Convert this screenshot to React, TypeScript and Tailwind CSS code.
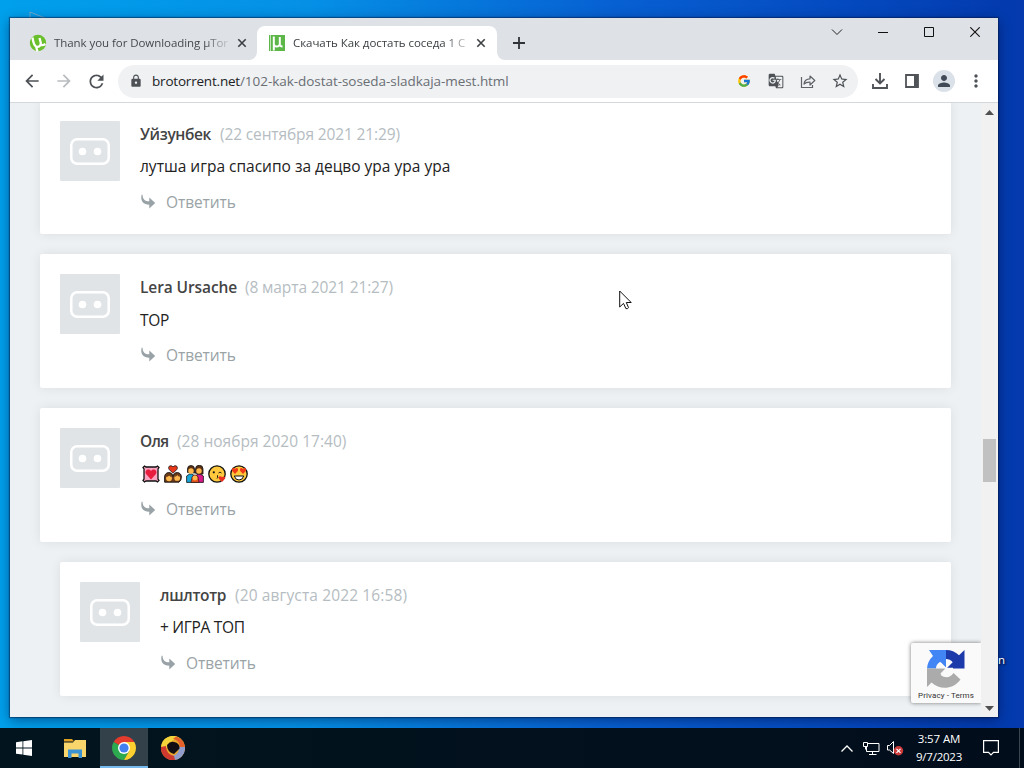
import type { ReactNode } from "react";
import { FcGoogle } from "react-icons/fc";
import {
  MdArrowBack,
  MdArrowForward,
  MdRefresh,
  MdLock,
  MdStarBorder,
  MdPerson,
  MdMoreVert,
  MdGTranslate,
} from "react-icons/md";

type Comment = {
  author: string;
  authorClass: string;
  date: string;
  dateClass: string;
  body: ReactNode;
  bodyClass: string;
  cardClass: string;
};

function Emojis() {
  return (
    <span className="flex gap-[4px] pl-[2px]">
      <svg width="18" height="18" viewBox="0 0 18 18" role="img" aria-label="💟">
        <path d="M2.500 1 4 2h10l1.500-1L17 2.500 16 4v10l1 1.500L15.500 17 14 16H4l-1.500 1L1 15.500 2 14V4L1 2.500Z" fill="#f9a3c0" stroke="#111" strokeWidth="1.300" />
        <path d="M9 14.500 4.300 9.300C1.800 5.500 6.500 2.500 9 6c2.500-3.500 7.200-.5 4.700 3.300Z" fill="#e81c3c" />
      </svg>
      <svg width="18" height="18" viewBox="0 0 18 18" role="img" aria-label="👩‍❤️‍👩">
        <path d="M9 8.300 5.300 4.600C3 1 7.300-.5 9 2c1.700-2.500 6-1 3.700 2.600Z" fill="#e8381b" stroke="#111" strokeWidth=".8" />
        <path d="M.6 17.200V12a4.200 4.200 0 0 1 8.400-.5A4.200 4.200 0 0 1 17.400 12q.2 3-2.400 5.200Z" fill="#6b3a18" stroke="#111" strokeWidth=".9" />
        <circle cx="5" cy="13.300" r="2.900" fill="#ffb94c" />
        <circle cx="13.200" cy="12.900" r="2.900" fill="#ffb94c" />
        <path d="M2.200 12q2.300 0 3-1.700.6 1.500 2.500 1.700Q7 9.500 5 9.500T2.200 12ZM10.400 11.700q2.300 0 3-1.700.6 1.500 2.500 1.700-.7-2.500-2.700-2.500t-2.800 2.500Z" fill="#6b3a18" />
      </svg>
      <svg width="18" height="18" viewBox="0 0 18 18" role="img" aria-label="👪">
        <path d="M.6 17.400V11l3-2h2l3.400 2v6.400Z" fill="#18a6d8" stroke="#111" strokeWidth=".8" />
        <path d="M17.400 17.400V11l-3-2h-2L9 11v6.400Z" fill="#d9198a" stroke="#111" strokeWidth=".8" />
        <path d="M1.500 7.500V4a3.500 3.500 0 0 1 7 0v3l1 1V4a3.500 3.500 0 0 1 7.500 0v5h-4L9 8Z" fill="#5d3115" stroke="#111" strokeWidth=".8" />
        <circle cx="5" cy="6" r="2.700" fill="#ffb94c" />
        <circle cx="13" cy="6" r="2.700" fill="#ffb94c" />
        <path d="M5 17.400 6 12a3.200 3.200 0 0 1 6 0l1 5.400Z" fill="#e8551b" stroke="#111" strokeWidth=".6" />
        <circle cx="9" cy="13" r="2.400" fill="#ffb94c" />
      </svg>
      <svg width="18" height="18" viewBox="0 0 18 18" role="img" aria-label="😘">
        <circle cx="9" cy="9" r="8.200" fill="#ffc83d" stroke="#111" strokeWidth="1.300" />
        <circle cx="5.800" cy="7.300" r="1.100" fill="#111" />
        <path d="M10.500 8q1.500-1.800 3 0M9 10.500q2 .2 0 1.500 2 .2 0 1.500" fill="none" stroke="#111" strokeWidth=".9" />
        <path d="M14 17 10.800 13.800c-1-2.600 1.900-3.300 3.200-1.600 1.300-1.700 4.200-.5 3 1.600Z" fill="#e8301f" />
      </svg>
      <svg width="18" height="18" viewBox="0 0 18 18" role="img" aria-label="😍">
        <circle cx="9" cy="9" r="8.200" fill="#ffc83d" stroke="#111" strokeWidth="1.300" />
        <path d="M5 9 2.200 6C1 3 4 2 5 4.300 6 2 9 3 7.800 6ZM13 9l-2.800-3c-1.200-3 1.800-4 2.800-1.700C14 2 17 3 15.800 6Z" fill="#f03a17" />
        <path d="M4.300 11h9.400q-1 4-4.700 4t-4.700-4Z" fill="#fff" stroke="#111" />
      </svg>
    </span>
  );
}

const comments: Comment[] = [
  {
    author: "Уйзунбек",
    authorClass: "w-[80px] tracking-[-0.37px]",
    date: "(22 сентября 2021 21:29)",
    dateClass: "tracking-[-0.13px]",
    body: <span>лутша игра спасипо за децво ура ура ура</span>,
    bodyClass: "mt-[9px] mb-3",
    cardClass: "h-[133px]",
  },
  {
    author: "Lera Ursache",
    authorClass: "w-[105px] tracking-[-0.1px]",
    date: "(8 марта 2021 21:27)",
    dateClass: "tracking-[-0.12px]",
    body: <span className="tracking-[-0.3px]">TOP</span>,
    bodyClass: "mt-[10px] mb-[11px]",
    cardClass: "h-[134px]",
  },
  {
    author: "Оля",
    authorClass: "w-[37px] tracking-[-0.7px]",
    date: "(28 ноября 2020 17:40)",
    dateClass: "tracking-[0.02px]",
    body: <Emojis />,
    bodyClass: "mt-[10px] mb-[11px]",
    cardClass: "h-[134px]",
  },
  {
    author: "лшлтотр",
    authorClass: "w-[75px] tracking-[-0.3px]",
    date: "(20 августа 2022 16:58)",
    dateClass: "tracking-[0.13px]",
    body: <span className="tracking-[-0.3px]">+ ИГРА ТОП</span>,
    bodyClass: "mt-[9px] mb-3",
    cardClass: "ml-5 h-[134px]",
  },
];

function CommentCard({ c }: { c: Comment }) {
  return (
    <article className={`flex shrink-0 gap-5 rounded-[2px] bg-white p-5 shadow-[0_0_12px_rgba(0,20,30,0.08)] ${c.cardClass}`}>
      <div className="flex size-[60px] shrink-0 items-center justify-center rounded-[1px] bg-[#e0e4e7]">
        <svg width="40" height="27" viewBox="0 0 40 27">
          <rect x="1.250" y="1.250" width="37.500" height="24.500" rx="6" fill="none" stroke="#fff" strokeWidth="2.500" />
          <circle cx="12.500" cy="13.500" r="3.800" fill="#fff" />
          <circle cx="27.500" cy="13.500" r="3.800" fill="#fff" />
        </svg>
      </div>
      <div className="flex flex-col whitespace-nowrap text-[15.500px] leading-6">
        <div className="flex h-6 pt-[1px]">
          <span className={`shrink-0 font-semibold text-[#444] ${c.authorClass}`}>{c.author}</span>
          <span className={`text-[#b5bdc2] ${c.dateClass}`}>{c.date}</span>
        </div>
        <div className={`flex h-6 items-center text-[#222] ${c.bodyClass}`}>{c.body}</div>
        <div className="flex h-6 items-center text-[#9aa3a6]">
          <svg width="16" height="16" viewBox="0 0 16 16" className="mr-[10px]">
            <path d="M1.600.8C.2 7.500 3.500 10.700 9.300 10.700V14.600L15.200 9 9.300 3.500V7.300C5.500 7.500 2.500 5.500 2.600.8Z" fill="#98a2a7" />
          </svg>
          <span className="tracking-[-0.1px]">Ответить</span>
        </div>
      </div>
    </article>
  );
}

function CloseX() {
  return (
    <svg width="10" height="10" viewBox="0 0 10 10" className="shrink-0">
      <path d="m1.300 1.300 7.400 7.400m0-7.400L1.300 8.700" stroke="#3c4043" strokeWidth="1.600" />
    </svg>
  );
}

function TabStrip() {
  return (
    <header className="flex h-[42px] shrink-0 bg-[#dee1e6]">
      <div className="mt-2 flex h-[34px] w-[247px] items-center pl-[19px]">
        <svg width="18" height="18" viewBox="0 0 18 18" className="shrink-0">
          <circle cx="9" cy="9" r="8.200" fill="#6abf2c" />
          <path d="M3.500 3.500Q4.500 11 7 12.500c3 1 5-.7 4.800-3.500L10.500 4M12 11q2 .5 4.500-1M7 12.500l1.500 5" fill="none" stroke="#fff" strokeWidth="2.300" />
        </svg>
        <span className="ml-[7px] w-[174px] overflow-hidden text-[11.500px] tracking-[-0.06px] whitespace-nowrap text-[#45494d] [mask-image:linear-gradient(to_right,#000_150px,transparent_178px)]">
          Thank you for Downloading µTor
        </span>
        <span className="ml-[9px] flex"><CloseX /></span>
      </div>
      <div className="relative mt-2 flex h-[34px] w-[240px] items-center rounded-t-lg bg-white pl-3">
        <svg width="8" height="8" viewBox="0 0 8 8" className="absolute bottom-0 -left-2"><path d="M8 0v8H0a8 8 0 0 0 8-8" fill="#fff" /></svg>
        <svg width="8" height="8" viewBox="0 0 8 8" className="absolute -right-2 bottom-0"><path d="M0 0v8h8a8 8 0 0 1-8-8" fill="#fff" /></svg>
        <svg width="16" height="16" viewBox="0 0 16 16" className="shrink-0">
          <path d="M0 0h16v16H0Z" fill="#5cb648" />
          <path d="M4.800 1.500v14M4.800 9q.3 2.600 3 2.600t3-2.600V2M11 9.500q0 2 2.500 2" fill="none" stroke="#fff" strokeWidth="2" />
          <path d="M1.500 0v16" stroke="#c4e5bb" strokeWidth="1" />
        </svg>
        <span className="ml-2 w-[176px] overflow-hidden text-[11.500px] tracking-[-0.05px] whitespace-nowrap text-[#3c4043] [mask-image:linear-gradient(to_right,#000_150px,transparent_182px)]">
          Скачать Как достать соседа 1 С
        </span>
        <span className="ml-[7px] flex"><CloseX /></span>
      </div>
      <svg width="12" height="12" viewBox="0 0 12 12" className="mt-[19px] ml-4 shrink-0">
        <path d="M6 0v12M0 6h12" stroke="#303338" strokeWidth="1.800" />
      </svg>
      <div className="ml-auto flex h-[28px] items-center">
        <span className="flex w-[46px] justify-center"><svg width="12" height="8" viewBox="0 0 12 8"><path d="m1 1.500 5 5 5-5" fill="none" stroke="#222" /></svg></span>
        <span className="flex w-[46px] justify-center"><svg width="10" height="2" viewBox="0 0 10 2"><path d="M0 1.500h10" stroke="#111" /></svg></span>
        <span className="flex w-[46px] justify-center"><svg width="10" height="10" viewBox="0 0 10 10"><path d="M.5.5h9v9h-9Z" fill="none" stroke="#111" /></svg></span>
        <span className="flex w-[46px] justify-center"><svg width="10" height="10" viewBox="0 0 10 10"><path d="m.3.3 9.400 9.400m0-9.400-9.400 9.400" stroke="#111" strokeWidth="1.100" /></svg></span>
      </div>
    </header>
  );
}

function Toolbar() {
  return (
    <div className="flex h-[43px] shrink-0 items-center border-b border-[#d5d8db] bg-white pl-[12px] text-[#4e5256]">
      <MdArrowBack size={20} />
      <MdArrowForward size={20} className="ml-3 text-[#b9bcbf]" />
      <MdRefresh size={21} className="ml-[12px]" />
      <div className="ml-[11px] flex h-[33px] w-[740px] items-center rounded-full bg-[#eff1f3]">
        <MdLock size={14} className="ml-[11px]" />
        <span className="ml-[9px] text-[13.500px] whitespace-nowrap">
          <span className="tracking-[-0.2px] text-[#202124]">brotorrent.net</span>
          <span className="tracking-[-0.05px] text-[#6a6e73]">/102-kak-dostat-soseda-sladkaja-mest.html</span>
        </span>
        <div className="ml-auto flex items-center">
          <span className="flex w-8 justify-center"><FcGoogle size={14} /></span>
          <span className="flex w-8 justify-center"><MdGTranslate size={16} /></span>
          <span className="flex w-8 justify-center">
            <svg width="16" height="16" viewBox="0 0 16 16" fill="none" stroke="#5f6368" strokeWidth="1.200">
              <path d="M1.500 4v10.500h11V12" />
              <path d="M4 11q.5-5 6-5.200V3l4.800 4.500L10 12V9.200Q6 9 4 11Z" strokeLinejoin="round" />
            </svg>
          </span>
          <span className="mr-[2px] flex w-8 justify-center"><MdStarBorder size={18} /></span>
        </div>
      </div>
      <svg width="18" height="18" viewBox="0 0 18 18" className="ml-[13px]" fill="none" stroke="#505458" strokeWidth="1.900">
        <path d="M9 1v10M4.500 7 9 11.500 13.500 7M2 12v4h14v-4" />
      </svg>
      <svg width="14" height="14" viewBox="0 0 14 14" className="ml-[16px]">
        <path d="M1 1h12v12H1Z" fill="none" stroke="#505458" strokeWidth="1.800" />
        <path d="M9 1h4v12H9Z" fill="#505458" />
      </svg>
      <span className="ml-[14px] flex size-[22px] items-center justify-center rounded-full bg-[#dbe1e8] text-[#414a57]"><MdPerson size={18} /></span>
      <MdMoreVert size={20} className="ml-[11px]" />
    </div>
  );
}

function Recaptcha() {
  return (
    <div className="absolute right-[17px] bottom-[14px] flex h-[60px] w-[70px] flex-col items-center rounded-l-[2px] bg-[#fafafa] pt-[6px] shadow-[0_0_4px_#777] [clip-path:inset(-6px_0_-6px_-6px)]">
      <svg width="40" height="40" viewBox="0 0 40 40">
        <path d="M20 1a19 19 0 0 1 13 5.300L38.500 1v18.500H20.500l6.200-6.200Q24 10 20 10Z" fill="#1c3aa9" />
        <path d="M1 19.500A19 19 0 0 1 7 7L3 1h17v18L14 13q-4 2-4 6.500Z" fill="#4285f4" />
        <path d="M1 19.500V38l4.500-4.500Q13 40 22 38.500q8-1.500 12.500-8L27.500 24q-5.500 7.500-13 2l6-6.500Z" fill="#ababab" />
        <path d="M14 13.500 20 19.500h7M20 20l-5 5" stroke="#fafafa" strokeWidth="1.500" fill="none" />
      </svg>
      <span className="mt-[2px] font-['Roboto'] text-[8px] leading-[10px] tracking-[0.1px] whitespace-nowrap text-[#333]">Privacy - Terms</span>
    </div>
  );
}

function BrowserWindow() {
  return (
    <main className="relative flex h-[699px] w-[988px] shrink-0 flex-col bg-white shadow-[0_0_1px_1px_rgba(0,20,60,0.450),0_3px_12px_rgba(0,5,40,0.450)]">
      <TabStrip />
      <Toolbar />
      <div className="flex min-h-0 flex-1 overflow-hidden bg-[#edf1f4]">
        <section className="-mt-[2px] flex w-[971px] flex-col gap-5 pr-[30px] pl-[30px]">
          {comments.map((c) => <CommentCard key={c.author} c={c} />)}
        </section>
        <div className="flex w-[17px] flex-col items-center bg-[#f1f1f1]">
          <svg width="9" height="5" viewBox="0 0 9 5" className="mt-[7px]"><path d="M0 5 4.500 0 9 5Z" fill="#505050" /></svg>
          <div className="mt-[324px] h-[43px] w-[13px] bg-[#c1c1c1]" />
          <svg width="9" height="5" viewBox="0 0 9 5" className="mt-auto mb-[6px]"><path d="M0 0 4.500 5 9 0Z" fill="#505050" /></svg>
        </div>
      </div>
      <Recaptcha />
    </main>
  );
}

function Taskbar() {
  return (
    <footer className="relative flex h-10 shrink-0 items-center bg-[linear-gradient(to_right,#02151e,#020d1c)] text-white">
      <span className="flex w-12 justify-center">
        <svg width="16" height="16" viewBox="0 0 16 16" fill="#fff"><path d="M0 2.200 6.500 1.300v6.200H0ZM7.300 1.200 16 0v7.500H7.300ZM0 8.400h6.500v6.200L0 13.700ZM7.300 8.400H16V16l-8.700-1.300Z" /></svg>
      </span>
      <span className="ml-[3px] flex w-12 justify-center">
        <svg width="22" height="19" viewBox="0 0 22 19">
          <path d="M0 0h8l2 2.500H0Z" fill="#e0a022" />
          <path d="M0 18V3.500h9L11 1h11v17Z" fill="#f8d66b" />
          <path d="M4 19v-8.500h14V19h-3.500v-4.500h-7V19Z" fill="#3c93d4" />
        </svg>
      </span>
      <span className="ml-px flex h-10 w-12 items-center justify-center border-b-2 border-[#76b9ed] bg-[#33424a] pt-[2px]">
        <svg width="24" height="24" viewBox="0 0 24 24">
          <path d="M12 12 1.610 6a12 12 0 0 1 20.780 0Z" fill="#e33b2e" />
          <path d="M12 12 1.610 6A12 12 0 0 0 12 24l5.200-9Z" fill="#2da94f" />
          <path d="M12 6h10.390A12 12 0 0 1 12 24l5.200-9Z" fill="#fdd02f" />
          <circle cx="12" cy="12" r="6" fill="#fff" />
          <circle cx="12" cy="12" r="4.600" fill="#4280ef" />
        </svg>
      </span>
      <span className="flex w-[50px] justify-center">
        <svg width="24" height="24" viewBox="0 0 24 24">
          <circle cx="12" cy="12" r="12" fill="#e9a52c" />
          <path d="M0 12A12 12 0 0 1 20 3Q9 2 6 12Z" fill="#f3d43a" />
          <path d="M15 .4A12 12 0 0 1 24 12h-5Q19 4 12 3Z" fill="#e5612c" />
          <path d="M24 11a12 12 0 0 1-12 13l-1-4q7-1 7-9Z" fill="#8f9ccc" />
          <path d="M14 24A12 12 0 0 1 0 11l5-1q0 8 8 10Z" fill="#cf3a30" />
          <path d="M6 9q3-4 7-3 6 1 5.500 6.500L13 18Q6 16 6 9Z" fill="#130e13" />
        </svg>
      </span>
      <div className="ml-auto flex items-center">
        <svg width="12" height="7" viewBox="0 0 12 7"><path d="m.5 6.500 5.500-5.500 5.500 5.500" fill="none" stroke="#fff" strokeWidth="1.300" /></svg>
        <svg width="17" height="15" viewBox="0 0 17 15" className="ml-[10px]" fill="none" stroke="#fff">
          <path d="M5 2.500h11v8H3.500V5.500M9.500 10.500v3M6 13.500h7.500M.5 1.500h4v4h-4ZM2.500 5.500v3" />
        </svg>
        <svg width="17" height="16" viewBox="0 0 17 16" className="ml-[7px]">
          <path d="M.5 5.500h2L6.500 1.500v12L2.500 10H.500Z" fill="none" stroke="#fff" />
          <circle cx="11.500" cy="10.800" r="4.700" fill="#cc3a3a" />
          <path d="m9.500 8.800 4 4m0-4-4 4" stroke="#fff" strokeWidth="1.200" />
        </svg>
        <div className="ml-[10px] flex w-[50px] flex-col items-center text-[11.500px] leading-[18px] whitespace-nowrap">
          <span className="tracking-[-0.1px]">3:57 AM</span>
          <span className="tracking-[-0.22px]">9/7/2023</span>
        </div>
        <svg width="16" height="16" viewBox="0 0 16 16" className="ml-[19px]" fill="none" stroke="#fff" strokeWidth="1.200"><path d="M.6.600h14.800v11.800H10.500L8 15l-2.500-2.600H.600Z" /></svg>
        <span className="ml-[20px] h-10 w-px bg-[#3a4650]" />
        <span className="w-1" />
      </div>
    </footer>
  );
}

export default function App() {
  return (
    <div className="relative flex h-[768px] w-[1024px] flex-col overflow-hidden bg-[linear-gradient(to_right,#00a0ec_0%,#0590e6_30%,#0760d2_60%,#0447bd_85%,#0339ac_100%)] font-['Open_Sans','Noto_Sans',sans-serif]">
      <svg width="18" height="10" viewBox="0 0 18 10" className="absolute top-[10px] left-[29px]"><path d="M1 9V2l15 6" fill="none" stroke="#70a9cc" /></svg>
      <div className="flex h-[728px] shrink-0 pt-[18px] pl-[10px]">
        <BrowserWindow />
      </div>
      <span className="absolute top-[651px] left-[998px] text-[11.500px] leading-[18px] text-white [text-shadow:1px_1px_2px_#000]">n</span>
      <Taskbar />
      <svg width="14" height="21" viewBox="0 0 14 21" className="absolute top-[290px] left-[619px]">
        <path d="M.7 1v16l3.800-3.600 2.400 5.200q2 .6 2.600-1L7.300 12.500h4.900Z" fill="#fff" stroke="#111" />
      </svg>
    </div>
  );
}
